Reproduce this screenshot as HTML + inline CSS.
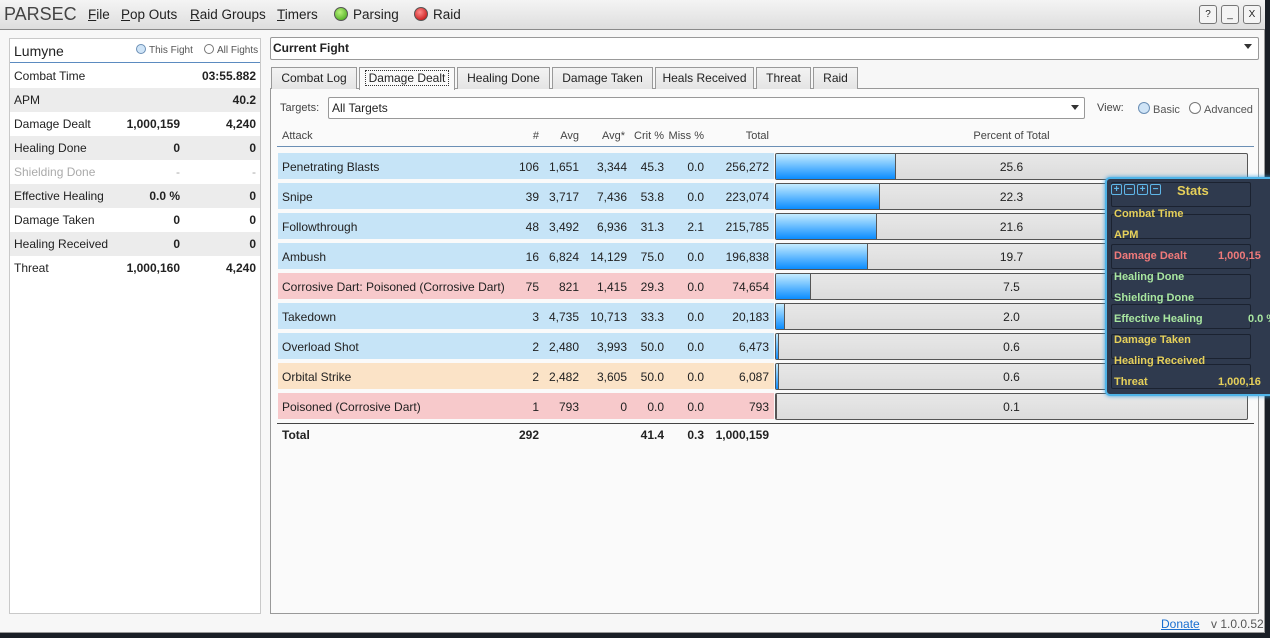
<!DOCTYPE html>
<html><head><meta charset="utf-8"><style>
*{box-sizing:border-box;margin:0;padding:0}
body{width:1270px;height:638px;overflow:hidden;background:#1a1f26;font-family:"Liberation Sans",sans-serif;font-size:12px;color:#222;position:relative}
.win{position:absolute;left:0;top:0;width:1265px;height:633px;background:#f7f7f7;border-right:1px solid #999;border-bottom:1px solid #999}
.a{position:absolute;white-space:nowrap}
.title{position:absolute;left:0;top:0;width:1265px;height:30px;background:linear-gradient(#f4f4f4,#dedede);border-bottom:1px solid #8a8a8a}
.menu{font-size:13.5px;top:7px}
.menu u{text-decoration:underline}
.dot{display:inline-block;width:14px;height:14px;border-radius:50%;vertical-align:-2px;margin-right:5px;border:1px solid #555}
.wb{position:absolute;top:5px;width:18px;height:19px;border:1px solid #777;border-radius:3px;background:#f4f4f4;font-size:10px;text-align:center;line-height:17px}
.left{position:absolute;left:9px;top:38px;width:252px;height:576px;border:1px solid #c9c9c9;background:#fff}
.lrow{position:absolute;left:10px;width:250px;height:24px;font-size:12px}
.lrow span{position:absolute;top:5px}
.radio{display:inline-block;width:10px;height:10px;border-radius:50%;border:1px solid #777;vertical-align:-1px;margin-right:3px;background:#fff}
.panel{position:absolute;left:270px;top:88px;width:989px;height:526px;border:1px solid #999;background:#fafafa}
.tab{position:absolute;top:67px;height:22px;border:1px solid #999;border-bottom:none;background:linear-gradient(#f3f3f3,#e4e4e4);font-size:12px;text-align:center;line-height:21px}
.row{position:absolute;left:278px;width:496px;height:26px}
.row span{position:absolute;top:7px;font-size:12px}
.r{text-align:right}
.bar{position:absolute;left:775px;width:473px;height:27px;border:1px solid #555;background:linear-gradient(#e8e8e8,#dcdcdc);border-radius:2px;overflow:hidden}
.fill{position:absolute;left:0;top:0;bottom:0;background:linear-gradient(#c4ecff,#0a8cff);border-right:1px solid #555}
.bar b{position:absolute;left:0;right:0;top:6px;text-align:center;font-weight:normal;font-size:12px}
.hdr{position:absolute;top:130px;font-size:11px;color:#444}
.stats{position:absolute;left:1105px;top:177px;width:170px;height:219px;background:#2f3a4e;border:2px solid #4fb4e8;border-radius:5px;box-shadow:0 0 4px #3aa0e0;font-size:11px;font-weight:bold}
.stats .a{left:7px}
.sb{position:absolute;left:4px;width:140px;height:25px;border:1px solid #1b2230;border-radius:2px}
.ic{position:absolute;top:5px;width:11px;height:11px;border:1px solid #5fb6e8;border-radius:2px;color:#5fb6e8;font-size:10px;line-height:9px;text-align:center;font-weight:bold}
</style></head><body>
<div class="win">
<div class="title"></div>
<div class="a" style="left:4px;top:4px;font-size:18px;color:#444;letter-spacing:0">PARSEC</div>
<div class="a menu" style="left:88px"><u>F</u>ile</div>
<div class="a menu" style="left:121px"><u>P</u>op Outs</div>
<div class="a menu" style="left:190px"><u>R</u>aid Groups</div>
<div class="a menu" style="left:277px"><u>T</u>imers</div>
<div class="a menu" style="left:334px"><span class="dot" style="background:radial-gradient(circle at 40% 35%,#b8f27a,#3aa012)"></span>Parsing</div>
<div class="a menu" style="left:414px"><span class="dot" style="background:radial-gradient(circle at 40% 35%,#ff8a8a,#b00)"></span>Raid</div>
<div class="wb" style="left:1199px">?</div><div class="wb" style="left:1221px">_</div><div class="wb" style="left:1243px">X</div>

<div class="left"></div>
<div class="a" style="left:14px;top:43px;font-size:14px">Lumyne</div>
<div class="a" style="left:136px;top:44px;font-size:10px;color:#555"><span class="radio" style="background:#cfe4f7;border-color:#6b8fb5"></span>This Fight</div>
<div class="a" style="left:204px;top:44px;font-size:10px;color:#555"><span class="radio"></span>All Fights</div>
<div class="a" style="left:10px;top:62px;width:250px;height:1px;background:#5b8bc0"></div>
<div class="lrow" style="top:64px"><span style="left:4px">Combat Time</span><span style="right:4px;font-weight:bold">03:55.882</span></div>
<div class="lrow" style="top:88px;background:#ececec"><span style="left:4px">APM</span><span style="right:4px;font-weight:bold">40.2</span></div>
<div class="lrow" style="top:112px"><span style="left:4px">Damage Dealt</span><span style="right:80px;font-weight:bold">1,000,159</span><span style="right:4px;font-weight:bold">4,240</span></div>
<div class="lrow" style="top:136px;background:#ececec"><span style="left:4px">Healing Done</span><span style="right:80px;font-weight:bold">0</span><span style="right:4px;font-weight:bold">0</span></div>
<div class="lrow" style="top:160px;color:#aaa"><span style="left:4px">Shielding Done</span><span style="right:80px">-</span><span style="right:4px">-</span></div>
<div class="lrow" style="top:184px;background:#ececec"><span style="left:4px">Effective Healing</span><span style="right:80px;font-weight:bold">0.0 %</span><span style="right:4px;font-weight:bold">0</span></div>
<div class="lrow" style="top:208px"><span style="left:4px">Damage Taken</span><span style="right:80px;font-weight:bold">0</span><span style="right:4px;font-weight:bold">0</span></div>
<div class="lrow" style="top:232px;background:#ececec"><span style="left:4px">Healing Received</span><span style="right:80px;font-weight:bold">0</span><span style="right:4px;font-weight:bold">0</span></div>
<div class="lrow" style="top:256px"><span style="left:4px">Threat</span><span style="right:80px;font-weight:bold">1,000,160</span><span style="right:4px;font-weight:bold">4,240</span></div>

<div class="a" style="left:270px;top:37px;width:989px;height:23px;border:1px solid #999;background:#fff;border-radius:2px"></div>
<div class="a" style="left:273px;top:41px;font-weight:bold">Current Fight</div>
<div class="a" style="left:1244px;top:44px;border-left:4px solid transparent;border-right:4px solid transparent;border-top:5px solid #333"></div>

<div class="panel"></div>
<div class="tab" style="left:271px;width:86px">Combat Log</div>
<div class="tab" style="left:359px;width:96px;background:#fafafa;height:23px"><span style="border:1px dotted #333;padding:0 3px">Damage Dealt</span></div>
<div class="tab" style="left:457px;width:93px">Healing Done</div>
<div class="tab" style="left:552px;width:101px">Damage Taken</div>
<div class="tab" style="left:655px;width:99px">Heals Received</div>
<div class="tab" style="left:756px;width:55px">Threat</div>
<div class="tab" style="left:813px;width:45px">Raid</div>

<div class="a" style="left:280px;top:102px;font-size:11px;color:#444">Targets:</div>
<div class="a" style="left:328px;top:97px;width:757px;height:22px;border:1px solid #999;background:#fff;border-radius:2px"></div>
<div class="a" style="left:332px;top:101px">All Targets</div>
<div class="a" style="left:1071px;top:105px;border-left:4px solid transparent;border-right:4px solid transparent;border-top:5px solid #333"></div>
<div class="a" style="left:1097px;top:102px;font-size:11px;color:#444">View:</div>
<div class="a" style="left:1138px;top:102px;font-size:11px;color:#555"><span class="radio" style="width:12px;height:12px;background:#cfe4f7;border-color:#6b8fb5"></span>Basic</div>
<div class="a" style="left:1189px;top:102px;font-size:11px;color:#555"><span class="radio" style="width:12px;height:12px"></span>Advanced</div>

<div class="hdr" style="left:282px">Attack</div>
<div class="hdr" style="left:500px;width:39px;text-align:right">#</div>
<div class="hdr" style="left:540px;width:39px;text-align:right">Avg</div>
<div class="hdr" style="left:580px;width:45px;text-align:right">Avg*</div>
<div class="hdr" style="left:628px;width:36px;text-align:right">Crit %</div>
<div class="hdr" style="left:666px;width:38px;text-align:right">Miss %</div>
<div class="hdr" style="left:710px;width:59px;text-align:right">Total</div>
<div class="hdr" style="left:775px;width:473px;text-align:center">Percent of Total</div>
<div class="a" style="left:277px;top:146px;width:977px;height:1px;background:#6b8fb5"></div>

<div id="rows"></div>

<div class="a" style="left:277px;top:423px;width:977px;height:1px;background:#444"></div>
<div class="a" style="left:282px;top:428px;font-weight:bold">Total</div>
<div class="a r" style="left:500px;width:39px;top:428px;font-weight:bold">292</div>
<div class="a r" style="left:628px;width:36px;top:428px;font-weight:bold">41.4</div>
<div class="a r" style="left:666px;width:38px;top:428px;font-weight:bold">0.3</div>
<div class="a r" style="left:700px;width:69px;top:428px;font-weight:bold">1,000,159</div>

<div class="a" style="left:1161px;top:617px;color:#1a6fd0;text-decoration:underline">Donate</div>
<div class="a" style="left:1211px;top:617px;color:#555">v 1.0.0.52</div>
</div>

<div class="stats">
<div class="sb" style="top:3px"></div><div class="sb" style="top:35px"></div><div class="sb" style="top:65px"></div><div class="sb" style="top:95px"></div><div class="sb" style="top:125px"></div><div class="sb" style="top:155px"></div><div class="sb" style="top:185px"></div>
<div class="ic" style="left:4px">+</div><div class="ic" style="left:17px">−</div><div class="ic" style="left:30px">+</div><div class="ic" style="left:43px">−</div>
<div class="a" style="left:70px;top:4px;color:#e6d05a;font-size:13px">Stats</div>
<div class="a" style="top:29px;color:#e6d05a">Combat Time</div>
<div class="a" style="top:50px;color:#e6d05a">APM</div>
<div class="a" style="top:71px;color:#f07a7a">Damage Dealt</div>
<div class="a" style="left:111px;top:71px;color:#f07a7a">1,000,15</div>
<div class="a" style="top:92px;color:#a8e6a0">Healing Done</div>
<div class="a" style="top:113px;color:#a8e6a0">Shielding Done</div>
<div class="a" style="top:134px;color:#a8e6a0">Effective Healing</div>
<div class="a" style="left:141px;top:134px;color:#a8e6a0">0.0 %</div>
<div class="a" style="top:155px;color:#e6d05a">Damage Taken</div>
<div class="a" style="top:176px;color:#e6d05a">Healing Received</div>
<div class="a" style="top:197px;color:#e6d05a">Threat</div>
<div class="a" style="left:111px;top:197px;color:#e6d05a">1,000,16</div>
</div>

<script>
var d=[["Penetrating Blasts",106,"1,651","3,344","45.3","0.0","256,272",25.6,"#c6e4f7"],
["Snipe",39,"3,717","7,436","53.8","0.0","223,074",22.3,"#c6e4f7"],
["Followthrough",48,"3,492","6,936","31.3","2.1","215,785",21.6,"#c6e4f7"],
["Ambush",16,"6,824","14,129","75.0","0.0","196,838",19.7,"#c6e4f7"],
["Corrosive Dart: Poisoned (Corrosive Dart)",75,"821","1,415","29.3","0.0","74,654",7.5,"#f7c9cb"],
["Takedown",3,"4,735","10,713","33.3","0.0","20,183",2.0,"#c6e4f7"],
["Overload Shot",2,"2,480","3,993","50.0","0.0","6,473",0.6,"#c6e4f7"],
["Orbital Strike",2,"2,482","3,605","50.0","0.0","6,087",0.6,"#fbe3c7"],
["Poisoned (Corrosive Dart)",1,"793","0","0.0","0.0","793",0.1,"#f7c9cb"]];
var h="";d.forEach(function(r,i){var t=153+i*30;
h+='<div class="row" style="top:'+t+'px;background:'+r[8]+'"><span style="left:4px">'+r[0]+'</span>'+
'<span class="r" style="left:222px;width:39px">'+r[1]+'</span><span class="r" style="left:262px;width:39px">'+r[2]+'</span>'+
'<span class="r" style="left:302px;width:47px">'+r[3]+'</span><span class="r" style="left:350px;width:36px">'+r[4]+'</span>'+
'<span class="r" style="left:388px;width:38px">'+r[5]+'</span><span class="r" style="left:422px;width:69px">'+r[6]+'</span></div>'+
'<div class="bar" style="top:'+t+'px"><div class="fill" style="width:'+(r[7]*4.67)+'px"></div><b>'+r[7].toFixed(1)+'</b></div>';});
document.getElementById("rows").outerHTML=h;
</script>
</body></html>
